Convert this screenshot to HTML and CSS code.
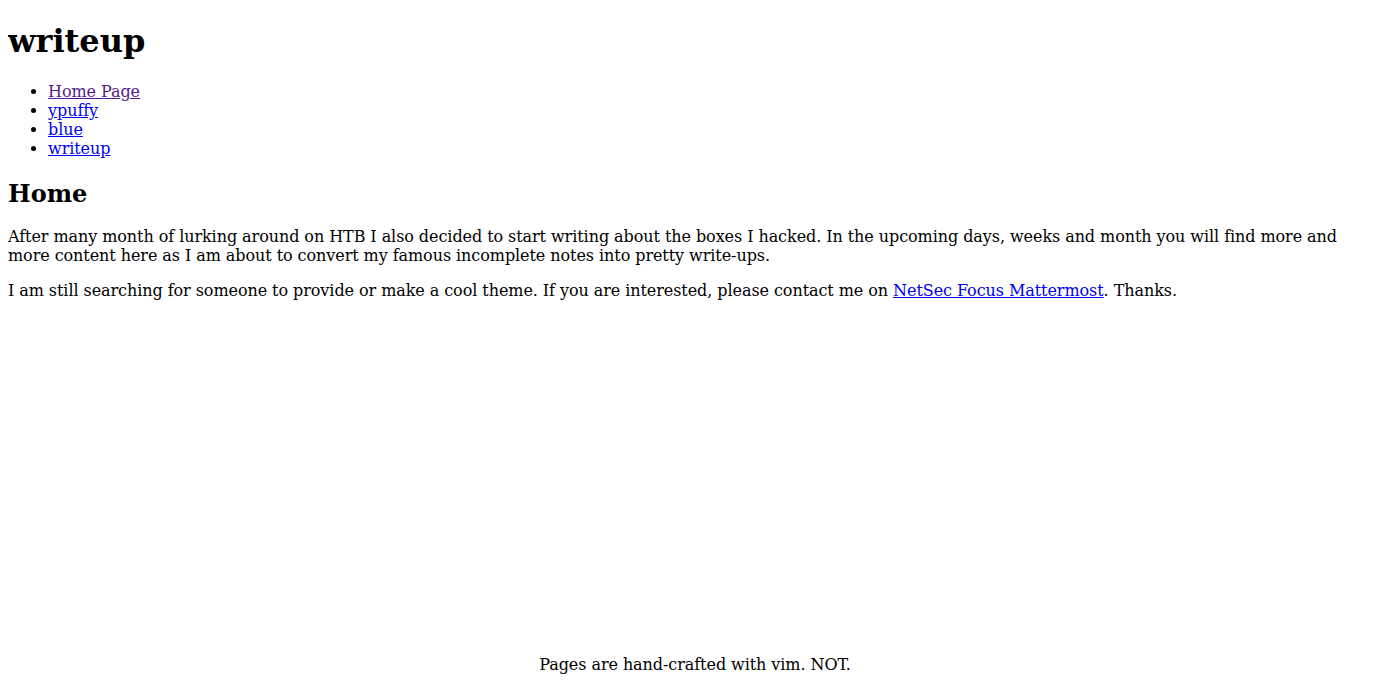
FILE: index.html
```html
<!DOCTYPE html>
<html>
<head>
<meta charset="utf-8">
<title>writeup</title>
<link rel="stylesheet" href="styles.css">
</head>
<body class="page">
<div class="content">
<h1 class="site-title">writeup</h1>
<ul class="nav">
<li><a class="link visited" href="#">Home Page</a></li>
<li><a class="link" href="#">ypuffy</a></li>
<li><a class="link" href="#">blue</a></li>
<li><a class="link" href="#">writeup</a></li>
</ul>
<h2 class="page-title">Home</h2>
<p class="text">After many month of lurking around on HTB I also decided to start writing about the boxes I hacked. In the upcoming days, weeks and month you will find more and more content here as I am about to convert my famous incomplete notes into pretty write-ups.</p>
<p class="text">I am still searching for someone to provide or make a cool theme. If you are interested, please contact me on <a class="link" href="#">NetSec Focus Mattermost</a>. Thanks.</p>
</div>
<footer class="footer">Pages are hand-crafted with vim. NOT.</footer>
</body>
</html>
```
FILE: styles.css
```css
html, body {
  height: 100%;
}
.page {
  margin: 8px;
  height: calc(100% - 16px);
  display: flex;
  flex-direction: column;
  font-family: "DejaVu Serif", serif;
  font-size: 16px;
  letter-spacing: -0.07px;
  color: #000;
  background: #fff;
}
.content {
  flex: 1;
}
.site-title {
  font-size: 32px;
  letter-spacing: 0;
  margin: 14.44px 0 21.44px;
}
.nav {
  margin: 16px 0;
  padding-left: 40px;
}
.page-title {
  font-size: 24px;
  letter-spacing: 0;
  margin: 21px 0 19px;
}
.text {
  margin: 16px 0;
}
.link {
  color: #0000ee;
}
.link.visited {
  color: #551a8b;
}
.footer {
  text-align: center;
  padding-bottom: 8px;
}
```
